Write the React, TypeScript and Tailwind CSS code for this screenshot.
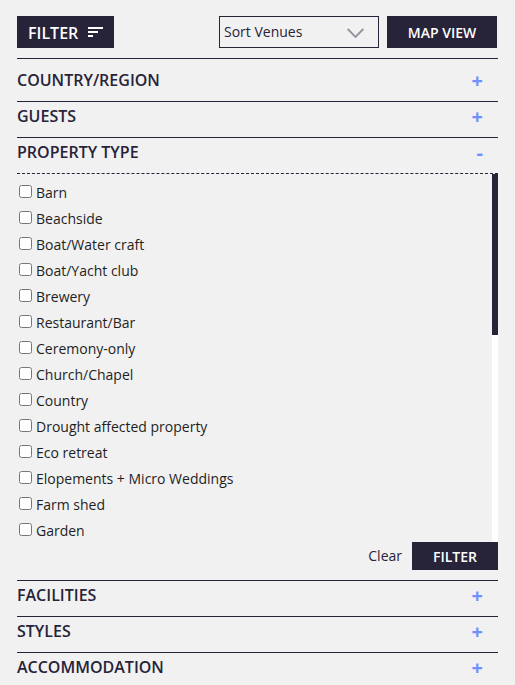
const sortOptions = ['Sort Venues']

const propertyTypes = [
  'Barn',
  'Beachside',
  'Boat/Water craft',
  'Boat/Yacht club',
  'Brewery',
  'Restaurant/Bar',
  'Ceremony-only',
  'Church/Chapel',
  'Country',
  'Drought affected property',
  'Eco retreat',
  'Elopements + Micro Weddings',
  'Farm shed',
  'Garden',
]

function SectionToggle({ title, open = false }: { title: string; open?: boolean }) {
  return (
    <h2>
      <button
        type="button"
        aria-expanded={open}
        className="flex h-[35px] w-full items-start justify-between pt-[3px] pr-[15px] text-left leading-[22px] font-semibold"
      >
        <span>{title}</span>
        <span className="text-xl leading-6 font-bold text-[#7090ff]">{open ? '-' : '+'}</span>
      </button>
    </h2>
  )
}

export default function App() {
  return (
    <main className="min-h-screen bg-[#f1f1f1] px-[17px] pt-4 font-['Open_Sans',sans-serif] text-[#272339]">
      <div className="flex items-center pr-px pb-2.5">
        <button type="button" className="flex h-8 items-center bg-[#272339] px-[11px] pt-0.5 font-semibold text-white">
          FILTER
          <svg className="mb-0.5 ml-2.5 h-3 w-[15px]" viewBox="0 0 15 12" fill="none" stroke="currentColor" strokeWidth="2" aria-hidden="true">
            <path d="M0 2h15M0 6h10M0 10h5" />
          </svg>
        </button>

        <div className="relative ml-auto w-40">
          <select
            aria-label="Sort venues"
            className="block h-8 w-full appearance-none border border-[#272339] bg-transparent px-1 text-sm"
          >
            {sortOptions.map((o) => (
              <option key={o}>{o}</option>
            ))}
          </select>
          <svg
            className="pointer-events-none absolute top-3 right-[15px] h-2.5 w-[17px]"
            viewBox="0 0 17 10"
            fill="none"
            stroke="#92909b"
            strokeWidth="1.800"
            aria-hidden="true"
          >
            <path d="M.7 1l7.800 8 7.800-8" />
          </svg>
        </div>

        <button type="button" className="ml-2 h-8 w-[110px] bg-[#272339] pt-0.5 text-sm font-semibold text-white">
          MAP VIEW
        </button>
      </div>

      <section className="border-t border-[#272339] pt-[7px]">
        <SectionToggle title="COUNTRY/REGION" />
      </section>
      <section className="border-t border-[#272339]">
        <SectionToggle title="GUESTS" />
      </section>

      <section className="border-t border-[#272339]">
        <SectionToggle title="PROPERTY TYPE" open />
        <div className="flex border-t border-dashed border-[#272339]">
          <ul className="h-[368px] flex-1 overflow-y-auto pt-1.5 [scrollbar-width:none]">
            {propertyTypes.map((name) => (
              <li key={name}>
                <label className="flex h-[26px] items-start pl-0.5 text-sm leading-[26px] text-[#1f1f1f]">
                  <input type="checkbox" className="mt-[5px] mr-1 h-[13px] w-[13px]" />
                  {name}
                </label>
              </li>
            ))}
          </ul>
          <div className="w-1.5 bg-white">
            <div className="h-[161px] bg-[#272339]" />
          </div>
        </div>
        <div className="flex items-center justify-end pb-2.5 text-sm">
          <button type="button" className="mr-2.5">
            Clear
          </button>
          <button type="button" className="h-7 w-[86px] bg-[#272339] pt-0.5 font-semibold text-white">
            FILTER
          </button>
        </div>
      </section>

      <section className="border-t border-[#272339]">
        <SectionToggle title="FACILITIES" />
      </section>
      <section className="border-t border-[#272339]">
        <SectionToggle title="STYLES" />
      </section>
      <section className="border-t border-[#272339]">
        <SectionToggle title="ACCOMMODATION" />
      </section>
    </main>
  )
}
